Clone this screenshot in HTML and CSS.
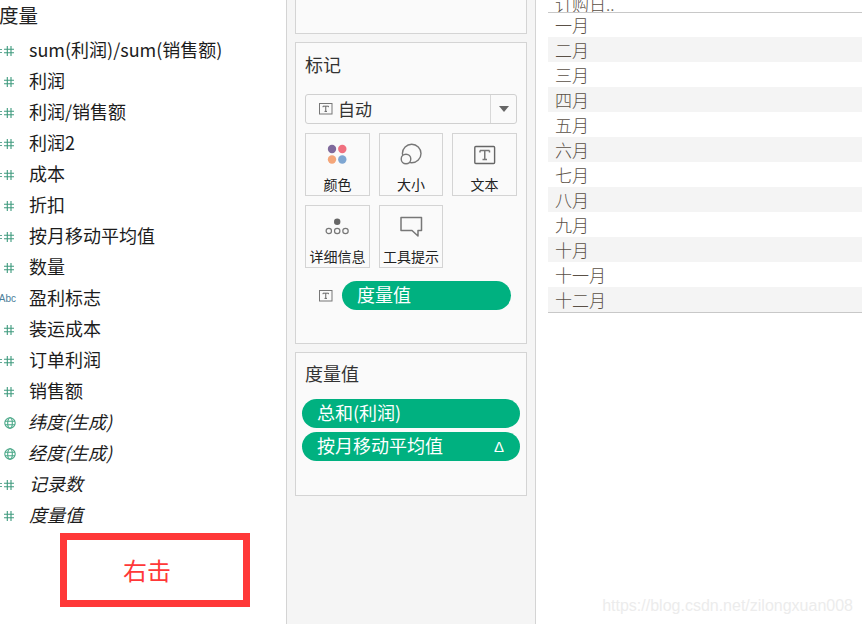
FILE: index.html
```html
<!DOCTYPE html>
<html lang="zh">
<head>
<meta charset="utf-8">
<title>度量</title>
<link rel="stylesheet" href="styles.css">
</head>
<body>
<svg class="defs" width="0" height="0">
  <symbol id="num" viewBox="0 0 10 10"><path d="M3.300 0V10M7 0V10M0 3.300H10M0 6.700H10" fill="none" stroke="#3f9a7e" stroke-width="1.100"/></symbol>
  <symbol id="globe" viewBox="0 0 12 12"><g fill="none" stroke="#4aa888" stroke-width="1.100"><circle cx="6" cy="6" r="5.200"/><ellipse cx="6" cy="6" rx="2.300" ry="5.200"/><path d="M1 4.300H11M1 7.700H11"/></g></symbol>
  <symbol id="tbox" viewBox="0 0 14 12"><rect x="0.500" y="0.500" width="12.500" height="10.500" fill="none" stroke="#777"/><path d="M4 3.200H9.500M6.750 3.200V8.400M5.500 8.400H8M4 3.200V4.200M9.500 3.200V4.200" fill="none" stroke="#666" stroke-width="1"/></symbol>
</svg>
<div class="app">
  <aside class="fields">
    <h2 class="fields-title">度量</h2>
    <ul class="field-list">
      <li class="field"><span class="calc">=</span><svg class="ico-num"><use href="#num"/></svg><span class="name">sum(利润)/sum(销售额)</span></li>
      <li class="field"><span class="calc"></span><svg class="ico-num"><use href="#num"/></svg><span class="name">利润</span></li>
      <li class="field"><span class="calc">=</span><svg class="ico-num"><use href="#num"/></svg><span class="name">利润/销售额</span></li>
      <li class="field"><span class="calc">=</span><svg class="ico-num"><use href="#num"/></svg><span class="name">利润2</span></li>
      <li class="field"><span class="calc">=</span><svg class="ico-num"><use href="#num"/></svg><span class="name">成本</span></li>
      <li class="field"><span class="calc"></span><svg class="ico-num"><use href="#num"/></svg><span class="name">折扣</span></li>
      <li class="field"><span class="calc">=</span><svg class="ico-num"><use href="#num"/></svg><span class="name">按月移动平均值</span></li>
      <li class="field"><span class="calc"></span><svg class="ico-num"><use href="#num"/></svg><span class="name">数量</span></li>
      <li class="field"><span class="abc">=Abc</span><span class="name">盈利标志</span></li>
      <li class="field"><span class="calc"></span><svg class="ico-num"><use href="#num"/></svg><span class="name">装运成本</span></li>
      <li class="field"><span class="calc">=</span><svg class="ico-num"><use href="#num"/></svg><span class="name">订单利润</span></li>
      <li class="field"><span class="calc"></span><svg class="ico-num"><use href="#num"/></svg><span class="name">销售额</span></li>
      <li class="field gen"><span class="calc"></span><svg class="ico-globe"><use href="#globe"/></svg><span class="name">纬度(生成)</span></li>
      <li class="field gen"><span class="calc"></span><svg class="ico-globe"><use href="#globe"/></svg><span class="name">经度(生成)</span></li>
      <li class="field gen"><span class="calc">=</span><svg class="ico-num"><use href="#num"/></svg><span class="name">记录数</span></li>
      <li class="field gen"><span class="calc"></span><svg class="ico-num"><use href="#num"/></svg><span class="name">度量值</span></li>
    </ul>
    <div class="callout">右击</div>
  </aside>

  <section class="shelves">
    <div class="panel panel-top"></div>
    <div class="panel panel-marks">
      <h3 class="panel-title">标记</h3>
      <div class="select">
        <svg class="ico-t"><use href="#tbox"/></svg>
        <span class="select-label">自动</span>
        <span class="select-arrow"><i class="tri"></i></span>
      </div>
      <div class="mark-grid">
        <div class="mark-btn">
          <svg class="mark-ico" viewBox="0 0 32 32"><circle cx="10" cy="10" r="4.200" fill="#7f6a9c"/><circle cx="20.300" cy="10" r="4.200" fill="#f0707f"/><circle cx="10" cy="20.500" r="4.200" fill="#f4a67a"/><circle cx="20.300" cy="20.500" r="4.200" fill="#7ea6d2"/></svg>
          <span class="mark-label">颜色</span>
        </div>
        <div class="mark-btn">
          <svg class="mark-ico" viewBox="0 0 32 32"><g fill="none" stroke="#777" stroke-width="1.400"><circle cx="16.700" cy="14.500" r="9.300"/><circle cx="11" cy="20" r="4.800" fill="#fafafa"/></g></svg>
          <span class="mark-label">大小</span>
        </div>
        <div class="mark-btn">
          <svg class="mark-ico" viewBox="0 0 32 32"><rect x="5.800" y="7.500" width="19.800" height="17" rx="1" fill="none" stroke="#666" stroke-width="1.400"/><path d="M11 11.500H20.500M15.750 11.500V20.500M13.500 20.500H18M11 11.500V13.500M20.500 11.500V13.500" fill="none" stroke="#777" stroke-width="1.500"/></svg>
          <span class="mark-label">文本</span>
        </div>
        <div class="mark-btn">
          <svg class="mark-ico" viewBox="0 0 32 32"><circle cx="15.200" cy="10.700" r="3.200" fill="#666"/><g fill="none" stroke="#777" stroke-width="1.200"><circle cx="6.800" cy="20" r="2.700"/><circle cx="15.200" cy="20" r="2.700"/><circle cx="23.500" cy="20" r="2.700"/></g></svg>
          <span class="mark-label">详细信息</span>
        </div>
        <div class="mark-btn">
          <svg class="mark-ico" viewBox="0 0 32 32"><path d="M6 6.500H26.500V19.500H23V25L17 19.500H6Z" fill="none" stroke="#777" stroke-width="1.500" stroke-linejoin="round"/></svg>
          <span class="mark-label">工具提示</span>
        </div>
      </div>
      <div class="mark-field">
        <svg class="ico-t"><use href="#tbox"/></svg>
        <span class="pill pill-mark">度量值</span>
      </div>
    </div>
    <div class="panel panel-values">
      <h3 class="panel-title">度量值</h3>
      <div class="pill-stack">
        <span class="pill">总和(利润)</span>
        <span class="pill">按月移动平均值<span class="delta">Δ</span></span>
      </div>
    </div>
  </section>

  <main class="view">
    <div class="table">
      <div class="table-head"><span>订购日..</span></div>
      <div class="row">一月</div>
      <div class="row">二月</div>
      <div class="row">三月</div>
      <div class="row">四月</div>
      <div class="row">五月</div>
      <div class="row">六月</div>
      <div class="row">七月</div>
      <div class="row">八月</div>
      <div class="row">九月</div>
      <div class="row">十月</div>
      <div class="row">十一月</div>
      <div class="row">十二月</div>
    </div>
    <div class="watermark">https://blog.csdn.net/zilongxuan008</div>
  </main>
</div>
</body>
</html>
```
FILE: styles.css
```css
* { box-sizing: border-box; }
html, body { margin: 0; padding: 0; }
body {
  width: 862px;
  height: 624px;
  overflow: hidden;
  background: #fff;
  color: #222;
  font-family: "Noto Sans CJK SC", "Liberation Sans", sans-serif;
}
.defs { position: absolute; }
.app { display: flex; width: 862px; height: 624px; }

/* Left field list */
.fields { width: 287px; flex: none; border-right: 1px solid #d4d4d4; overflow: hidden; }
.fields-title { margin: 0 0 0 -1px; height: 35px; font-size: 19.500px; font-weight: 400; line-height: 30px; color: #222; }
.field-list { margin: 0; padding: 0; list-style: none; }
.field { display: flex; align-items: center; height: 31px; font-size: 18px; color: #1c1c1c; }
.name { padding-bottom: 4px; }
.calc { width: 4px; flex: none; margin-left: -2px; margin-right: 2px; font-size: 11px; line-height: 1; color: #3f9a7e; overflow: hidden; }
.ico-num { width: 10px; height: 10px; flex: none; margin-right: 15px; }
.ico-globe { width: 12px; height: 12px; flex: none; margin-right: 13px; margin-left: -1px; transform: translateX(1px); }
.abc { width: 29px; flex: none; margin-left: -7px; margin-right: 7px; font-family: "Liberation Sans", sans-serif; font-size: 10px; color: #4b7e9a; text-align: left; }
.gen .name { font-style: italic; }
.callout {
  width: 190px;
  height: 74px;
  margin: 2px 0 0 60px;
  border: 7px solid #ff3838;
  color: #ff3838;
  font-size: 24px;
  line-height: 60px;
  text-align: center;
  padding-right: 16px;
}

/* Middle shelves */
.shelves { width: 249px; flex: none; display: flex; flex-direction: column; gap: 8px; padding: 0 8px; background: #f5f5f5; border-right: 1px solid #d4d4d4; }
.panel { width: 232px; background: #fafafa; border: 1px solid #d4d4d4; }
.panel-top { height: 34px; border-top: 0; }
.panel-marks { height: 302px; padding: 9px 9px 0; }
.panel-values { height: 144px; padding: 9px 6px 0; }
.panel-title { margin: 0; font-size: 18px; font-weight: 400; line-height: 25px; color: #333; }
.panel-values .panel-title { margin-left: 3px; height: 37px; line-height: 23px; }
.panel-marks .panel-title { height: 42px; }

.select { display: flex; align-items: center; width: 212px; height: 30px; border: 1px solid #d0d0d0; border-radius: 3px; padding-left: 13px; }
.ico-t { width: 14px; height: 12px; flex: none; }
.select-label { flex: 1; margin-left: 5px; padding-bottom: 2px; font-size: 17px; color: #333; }
.select-arrow { display: flex; align-items: center; justify-content: center; width: 26px; height: 100%; border-left: 1px solid #d8d8d8; }
.tri { width: 0; height: 0; border: 5px solid transparent; border-top: 6px solid #666; border-bottom: 0; }

.mark-grid { display: grid; grid-template-columns: 65px 64px 65px; grid-auto-rows: 63px; gap: 9px; margin-top: 9px; }
.mark-btn { display: flex; flex-direction: column; align-items: center; border: 1px solid #d4d4d4; }
.mark-ico { width: 32px; height: 32px; margin-top: 5px; flex: none; }
.mark-label { margin-top: 3px; font-size: 14px; line-height: 20px; color: #222; white-space: nowrap; }

.mark-field { display: flex; align-items: center; margin-top: 13px; padding-left: 14px; }
.mark-field .ico-t { margin-right: 9px; }
.pill { display: flex; align-items: center; justify-content: space-between; height: 29px; padding: 0 16px 4px 15px; border-radius: 15px; background: #00b180; color: #fff; font-size: 18px; line-height: 1; }
.pill-mark { width: 169px; }
.pill-stack { display: flex; flex-direction: column; gap: 4px; width: 218px; }
.delta { font-size: 15px; margin-top: 3px; font-family: "Liberation Sans", sans-serif; }

/* Right view */
.view { flex: 1; position: relative; padding-left: 12px; background: #fff; overflow: hidden; }
.table-head { display: flex; align-items: flex-end; height: 13px; overflow: hidden; border-bottom: 1px solid #c8c8c8; padding-left: 7px; font-size: 17px; font-weight: 300; line-height: 24px; color: #5a5046; }
.table-head span { display: block; flex: none; margin-bottom: -4px; }
.row { height: 25px; padding-left: 7px; font-size: 17px; font-weight: 300; line-height: 25px; color: #5a5046; }
.table-head + .row { height: 24px; line-height: 23px; }
.row:nth-child(odd) { background: #f4f4f4; }
.row:last-child { border-bottom: 1px solid #c8c8c8; height: 26px; }
.watermark { position: absolute; right: 9px; bottom: 8px; font-family: "Liberation Sans", sans-serif; font-size: 16px; line-height: 20px; color: #ececec; white-space: nowrap; }
```
